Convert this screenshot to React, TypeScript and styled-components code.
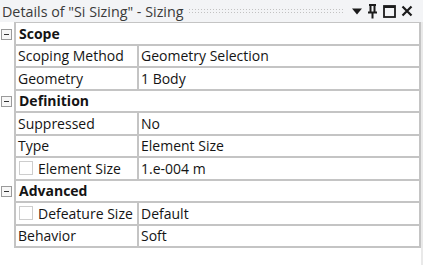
import React from 'react';
import styled, { createGlobalStyle } from 'styled-components';

const GlobalStyle = createGlobalStyle`
  body {
    margin: 0;
    background: #ffffff;
    font-family: "Open Sans", "Noto Sans", "Liberation Sans", sans-serif;
  }
`;

interface Prop {
  label: string;
  value: string;
  check?: boolean;
}

interface Group {
  name: string;
  props: Prop[];
}

const groups: Group[] = [
  {
    name: 'Scope',
    props: [
      { label: 'Scoping Method', value: 'Geometry Selection' },
      { label: 'Geometry', value: '1 Body' }
    ]
  },
  {
    name: 'Definition',
    props: [
      { label: 'Suppressed', value: 'No' },
      { label: 'Type', value: 'Element Size' },
      { label: 'Element Size', value: '1.e-004 m', check: true }
    ]
  },
  {
    name: 'Advanced',
    props: [
      { label: 'Defeature Size', value: 'Default', check: true },
      { label: 'Behavior', value: 'Soft' }
    ]
  }
];

const Panel = styled.div`
  width: 423px;
  height: 265px;
  display: flex;
  flex-direction: column;
  background: #ffffff;
  overflow: hidden;
`;

const TitleBar = styled.div`
  height: 22px;
  flex: none;
  display: flex;
  align-items: center;
  padding: 0 10px 0 2px;
  background: #f3f4f6;
  box-sizing: border-box;
`;

const Title = styled.span`
  font-size: 14.3px;
  color: #3a3a3a;
  white-space: nowrap;
`;

const Grip = styled.div`
  flex: 1;
  height: 6px;
  margin: 0 7px 0 5px;
  background-image: radial-gradient(circle, #c2c2c2 0.8px, transparent 0.9px);
  background-size: 3px 3px;
`;

const TitleButtons = styled.div`
  display: flex;
  align-items: center;
  gap: 5px;
  color: #1b1b1b;
`;

const Body = styled.div`
  flex: 1;
  display: flex;
`;

const Sheet = styled.div`
  flex: 1;
`;

const Scroll = styled.div`
  width: 2px;
  background: #e9e9e9;
`;

const Row = styled.div`
  display: flex;
  height: 22.5px;
`;

const Gutter = styled.div`
  width: 14px;
  flex: none;
  display: flex;
  align-items: center;
`;

const Toggle = styled.div`
  width: 9px;
  height: 9px;
  margin-left: 1px;
  border: 1px solid #9a9a9a;
  background: #f7f7f7;
  display: flex;
  align-items: center;
  justify-content: center;

  &::before {
    content: '';
    width: 5px;
    height: 1px;
    background: #333;
  }
`;

const Line = styled.div`
  flex: 1;
  display: flex;
  border-left: 2px solid #c4c4c4;
  border-right: 2px solid #c4c4c4;
  border-bottom: 2px solid #c4c4c4;
  box-sizing: border-box;
`;

const Cell = styled.div<{ $bold?: boolean; $wide?: boolean }>`
  display: flex;
  align-items: center;
  gap: 5px;
  box-sizing: border-box;
  padding-left: ${(p) => (p.$bold ? '3px' : '2px')};
  font-size: 14px;
  color: #141414;
  font-weight: ${(p) => (p.$bold ? 700 : 400)};
  white-space: nowrap;
  overflow: hidden;
  ${(p) => (p.$wide ? 'flex: 1;' : 'width: 123px; border-right: 2px solid #c4c4c4;')}
`;

const Check = styled.span`
  width: 14px;
  height: 14px;
  margin-left: 1px;
  box-sizing: border-box;
  border: 1px solid #cdcdcd;
  background: #ffffff;
  flex: none;
`;

const TopRule = styled.div`
  height: 0;
  margin-left: 14px;
  border-top: 1px solid #c4c4c4;
`;

function App(): React.ReactElement {
  return (
    <>
      <GlobalStyle />
      <Panel>
        <TitleBar>
          <Title>Details of "Si Sizing" - Sizing</Title>
          <Grip />
          <TitleButtons>
            <svg width="10" height="7" viewBox="0 0 10 7">
              <path d="M0 0.5h10L5 6.5z" fill="currentColor" />
            </svg>
            <svg width="11" height="15" viewBox="0 0 11 15">
              <path d="M2 1h7M3.5 1v7M7.5 1v7M1 8.5h9M5.5 8.5v6" stroke="currentColor" strokeWidth="2" fill="none" />
            </svg>
            <svg width="13" height="13" viewBox="0 0 13 13">
              <rect x="1" y="1" width="11" height="11" stroke="currentColor" strokeWidth="1.8" fill="none" />
              <path d="M1 2h11" stroke="currentColor" strokeWidth="2" />
            </svg>
            <svg width="12" height="12" viewBox="0 0 12 12">
              <path d="M1.5 1.5l9 9M10.5 1.5l-9 9" stroke="currentColor" strokeWidth="2.2" />
            </svg>
          </TitleButtons>
        </TitleBar>
        <Body>
          <Sheet>
            <TopRule />
            {groups.map((g) => (
              <React.Fragment key={g.name}>
                <Row>
                  <Gutter>
                    <Toggle />
                  </Gutter>
                  <Line>
                    <Cell $bold $wide>{g.name}</Cell>
                  </Line>
                </Row>
                {g.props.map((p) => (
                  <Row key={p.label}>
                    <Gutter />
                    <Line>
                      <Cell>
                        {p.check && <Check />}
                        {p.label}
                      </Cell>
                      <Cell $wide>{p.value}</Cell>
                    </Line>
                  </Row>
                ))}
              </React.Fragment>
            ))}
          </Sheet>
          <Scroll />
        </Body>
      </Panel>
    </>
  );
}

export default App;
